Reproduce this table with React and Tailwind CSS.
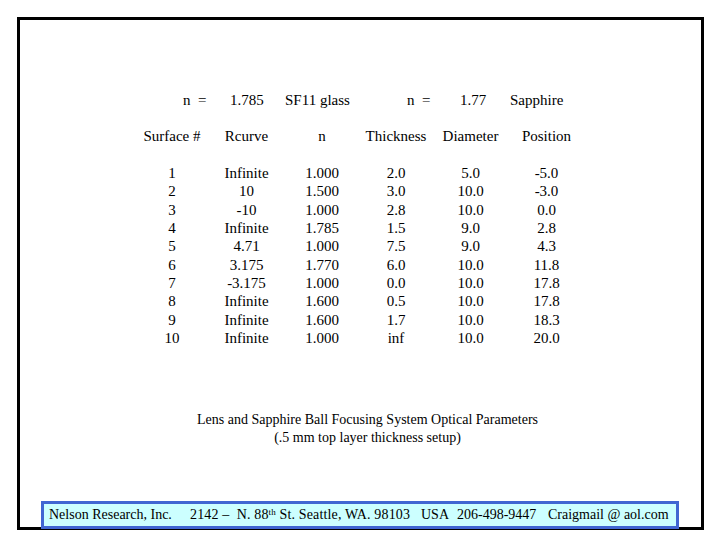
const rows = [
  ["1", "Infinite", "1.000", "2.0", "5.0", "-5.0"],
  ["2", "10", "1.500", "3.0", "10.0", "-3.0"],
  ["3", "-10", "1.000", "2.8", "10.0", "0.0"],
  ["4", "Infinite", "1.785", "1.5", "9.0", "2.8"],
  ["5", "4.71", "1.000", "7.5", "9.0", "4.3"],
  ["6", "3.175", "1.770", "6.0", "10.0", "11.8"],
  ["7", "-3.175", "1.000", "0.0", "10.0", "17.8"],
  ["8", "Infinite", "1.600", "0.5", "10.0", "17.8"],
  ["9", "Infinite", "1.600", "1.7", "10.0", "18.3"],
  ["10", "Infinite", "1.000", "inf", "10.0", "20.0"],
];

const headers = ["Surface #", "Rcurve", "n", "Thickness", "Diameter", "Position"];

const cols = "grid grid-cols-[74px_75px_76px_72px_77px_75px] text-center";

export default function App() {
  return (
    <main className="w-[720px] h-[540px] bg-white font-['Liberation_Serif',serif] text-black">
      <div className="ml-[17px] mt-[17px] w-[687px] h-[513px] border-[3px] border-black flex flex-col">
        <div className="pt-[71px] pl-[163px] grid grid-cols-[47px_55px_122px_53px_50px_auto] text-[15px] leading-[18px]">
          <span className="whitespace-pre">n  =</span>
          <span>1.785</span>
          <span>SF11 glass</span>
          <span className="whitespace-pre">n  =</span>
          <span>1.77</span>
          <span>Sapphire</span>
        </div>

        <div className={`${cols} mt-[18px] ml-[115px] text-[15px] leading-[18px]`}>
          {headers.map((h) => (
            <span key={h}>{h}</span>
          ))}
        </div>

        <div className="mt-[19px] ml-[115px] text-[15px]">
          {rows.map((r) => (
            <div key={r[0]} className={`${cols} h-[18.33px] leading-[18.33px]`}>
              {r.map((c, i) => (
                <span key={i}>{c}</span>
              ))}
            </div>
          ))}
        </div>

        <div className="mt-[64px] text-center text-[14px] leading-[18px] pl-[14px]">
          <p>Lens and Sapphire Ball Focusing System Optical Parameters</p>
          <p>(.5 mm top layer thickness setup)</p>
        </div>

        <div className="mt-auto mb-[-2px] ml-[21px] w-[638px] h-[28px] border-[3px] border-[#4066d2] bg-[#ccffff] flex items-center pl-[5px] text-[14px] leading-none whitespace-nowrap">
          <span className="w-[141px]">Nelson Research, Inc.</span>
          <span className="w-[231px] whitespace-pre tracking-[0.15px]">
            2142 –  N. 88<sup className="text-[9px]">th</sup> St. Seattle, WA. 98103
          </span>
          <span className="w-[36px]">USA</span>
          <span className="w-[91px]">206-498-9447</span>
          <span>Craigmail @ aol.com</span>
        </div>
      </div>
    </main>
  );
}
